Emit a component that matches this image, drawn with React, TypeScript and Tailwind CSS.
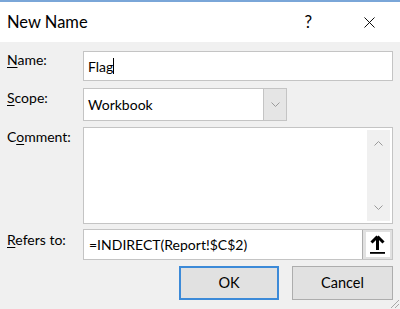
import { X } from "lucide-react";

const font = { fontFamily: 'Lato, "Noto Sans", sans-serif' };

function Label({ first, rest, className }: { first: string; rest: string; className?: string }) {
  return (
    <div className={`w-[83px] shrink-0 pl-[7px] text-[14px] text-black leading-none ${className ?? ""}`}>
      <span className="underline underline-offset-2">{first}</span>
      {rest}
    </div>
  );
}

function Chevron({ up }: { up?: boolean }) {
  return (
    <svg width="9" height="5" viewBox="0 0 9 5" className={up ? "rotate-180" : ""}>
      <path d="M0.5 0.5 L4.5 4.5 L8.5 0.5" fill="none" stroke="#9a9a9a" strokeWidth="1" />
    </svg>
  );
}

export default function App() {
  return (
    <div className="w-[400px] h-[309px] bg-[#f0f0f0] relative overflow-hidden" style={font}>
      {/* window top border */}
      <div className="h-[2px] bg-[#7aa6d8]" />

      {/* Title bar */}
      <div className="h-[40px] bg-white flex items-center justify-between pl-[7px] pr-[21px]">
        <span className="text-[16.5px] text-black">New Name</span>
        <div className="flex items-center gap-[48px]">
          <span className="text-[17px] text-black">?</span>
          <X className="w-[19px] h-[19px] text-black" strokeWidth={1.2} />
        </div>
      </div>

      <div className="flex flex-col pt-[9px] pr-[7px]">
        {/* Name */}
        <div className="flex items-start">
          <Label first="N" rest="ame:" className="pt-[2px]" />
          <div className="flex-1 h-[30px] bg-white border border-[#c4c4c4] flex items-center pl-[4px] text-[14px] text-black">
            Flag<span className="w-px h-[16px] bg-black" />
          </div>
        </div>

        {/* Scope */}
        <div className="flex items-start mt-[7px]">
          <Label first="S" rest="cope:" className="pt-[3px]" />
          <div className="w-[204px] h-[33px] bg-white border border-[#c4c4c4] flex">
            <div className="flex-1 flex items-center pl-[4px] text-[14px] text-black">Workbook</div>
            <div className="w-[23px] bg-[#e5e5e5] border-l border-[#c4c4c4] flex items-center justify-center">
              <Chevron />
            </div>
          </div>
        </div>

        {/* Comment */}
        <div className="flex items-start mt-[6px]">
          <div className="w-[83px] shrink-0 pl-[7px] pt-[3px] text-[14px] text-black leading-none">
            C<span className="underline underline-offset-2">o</span>mment:
          </div>
          <div className="flex-1 h-[97px] bg-white border border-[#c4c4c4] flex justify-end p-[2px]">
            <div className="w-[23px] bg-[#f0f0f0] flex flex-col items-center justify-between py-[11px]">
              <Chevron up />
              <Chevron />
            </div>
          </div>
        </div>

        {/* Refers to */}
        <div className="flex items-start mt-[5px]">
          <Label first="R" rest="efers to:" className="pt-[4px]" />
          <div className="flex-1 h-[31px] bg-white border border-[#c4c4c4] flex">
            <div className="flex-1 flex items-center pl-[5px] text-[14px] text-black">=INDIRECT(Report!$C$2)</div>
            <div className="w-[30px] bg-[#e1e1e1] border-l border-[#adadad] flex items-center justify-center">
              <div className="w-[24px] h-[25px] bg-white flex flex-col items-center justify-center">
                <svg width="15" height="19" viewBox="0 0 15 19">
                  <path d="M7.5 1.5 L1.5 7.5 M7.5 1.5 L13.5 7.5 M7.5 1.5 L7.5 15" fill="none" stroke="#000" strokeWidth="3" strokeLinecap="butt" />
                  <rect x="0" y="17" width="15" height="1.8" fill="#000" />
                </svg>
              </div>
            </div>
          </div>
        </div>

        {/* Buttons */}
        <div className="flex justify-end gap-[13px] mt-[6px]">
          <button className="w-[100px] h-[34px] bg-[#e1e1e1] border-2 border-[#3c8ad8] text-[14.5px] text-black">
            OK
          </button>
          <button className="w-[101px] h-[34px] bg-[#e1e1e1] border border-[#adadad] text-[14.5px] text-black">
            Cancel
          </button>
        </div>
      </div>

      {/* resize grip */}
      <svg width="12" height="12" viewBox="0 0 12 12" className="absolute right-0 bottom-0">
        <path d="M11 3 L3 11 M11 7 L7 11" stroke="#a8a8a8" strokeWidth="1" />
      </svg>
    </div>
  );
}
